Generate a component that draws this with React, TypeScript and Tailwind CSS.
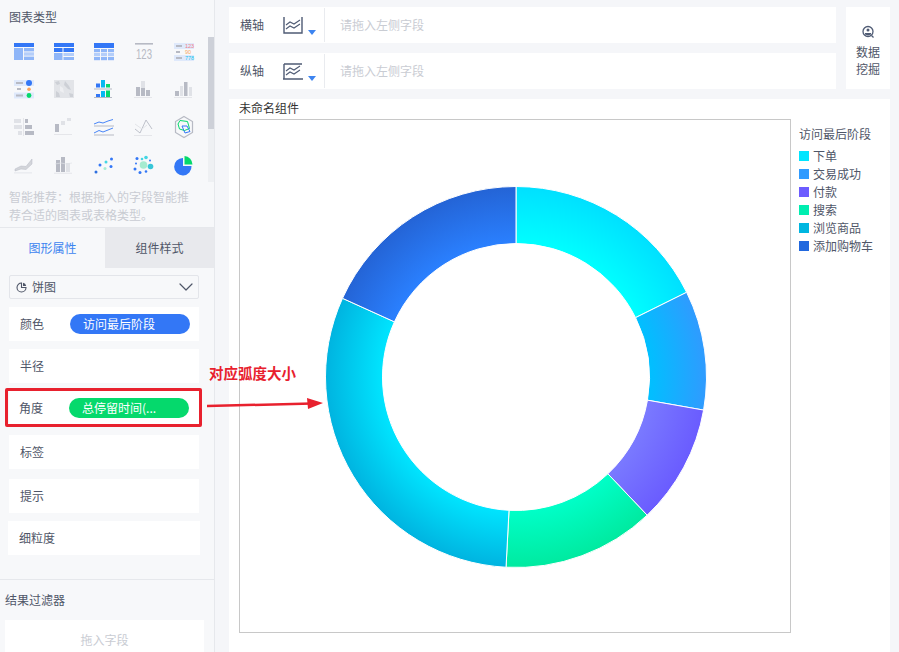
import { ChevronDown } from "lucide-react";

const FONT = { fontFamily: '"Noto Sans CJK SC", "Noto Sans", sans-serif' };

const BLUE = "#3377f6";
const SKY = "#8fb6f8";
const PALE = "#dfe9fb";
const GREY = "#b7bac4";
const LIGHT = "#e0e2e7";
const GREEN = "#05d96c";
const CYAN = "#06b8f2";

const LATIN = { fontFamily: '"Liberation Sans", sans-serif' };

const chartIcons = [
  // row 1
  <>
    <rect width="20" height="4" fill={BLUE} />
    <rect y="5" width="9" height="12" fill={SKY} />
    <rect x="10" y="5" width="10" height="3.4" fill={SKY} />
    <rect x="10" y="9.3" width="10" height="3.4" fill="#b4cefa" />
    <rect x="10" y="13.6" width="10" height="3.4" fill={SKY} />
  </>,
  <>
    <rect width="20" height="4" fill={BLUE} />
    <rect y="5" width="8.5" height="4" fill={BLUE} />
    <rect x="9.5" y="5" width="10.5" height="4" fill={BLUE} />
    <rect y="10" width="8.5" height="7" fill={SKY} />
    <rect x="9.5" y="10" width="10.5" height="3" fill="#b4cefa" />
    <rect x="9.5" y="14" width="10.5" height="3" fill={SKY} />
  </>,
  <>
    <rect width="20" height="5" fill={BLUE} />
    {[6, 10, 14].map((y) =>
      [0, 7, 14].map((x) => <rect key={`${x}-${y}`} x={x} y={y} width="6" height="3.2" fill={y === 10 ? "#b4cefa" : SKY} />)
    )}
  </>,
  <>
    <rect x="1" width="18" height="1.6" fill={GREY} />
    <text x="10" y="16" textAnchor="middle" fontSize="14" fill={GREY} style={LATIN} textLength="16" lengthAdjust="spacingAndGlyphs">123</text>
  </>,
  <>
    <rect width="20" height="6" fill={PALE} />
    <rect y="12" width="20" height="6" fill={PALE} />
    <rect x="2" y="2" width="6" height="2" fill={GREY} />
    <rect x="2" y="8" width="4" height="2" fill={GREY} />
    <rect x="2" y="14" width="6" height="2" fill={GREY} />
    <text x="11" y="5" fontSize="5.500" fill="#f0808a" style={LATIN}>123</text>
    <text x="11" y="11" fontSize="5.500" fill="#f8a860" style={LATIN}>90</text>
    <text x="11" y="17" fontSize="5.500" fill="#20c4ee" style={LATIN}>778</text>
  </>,
  // row 2
  <>
    <rect width="20" height="6" fill={PALE} />
    <rect y="12.500" width="20" height="6" fill={PALE} />
    <rect x="2" y="2" width="7" height="2" fill={GREY} />
    <rect x="3" y="8" width="4" height="2" fill={GREY} />
    <rect x="2" y="14.500" width="7" height="2" fill={GREY} />
    <circle cx="15" cy="3" r="3" fill={BLUE} />
    <circle cx="15" cy="9.200" r="1.800" fill="#fba35c" />
    <circle cx="15" cy="15.500" r="2.400" fill={GREEN} />
  </>,
  <>
    <rect width="20" height="18" fill="#e2e4e8" />
    <path d="M11 1l4 5 2 4-3-1-4-4zM2 11l3 2 1 4H2zM1 2l4-1 1 3-3 1zM15 13l4 1v3h-3z" fill="#cdd0d6" />
    <path d="M6 6l3 2 1 5-4-2z" fill="#eeeff2" />
  </>,
  <>
    <rect x="2" y="3.500" width="4" height="4" fill={BLUE} />
    <rect x="7" width="4" height="7.500" fill={CYAN} />
    <rect x="12" y="4" width="4" height="3.500" fill={GREEN} />
    <rect y="8.500" width="18" height="1" fill={GREY} />
    <rect x="2" y="14" width="4" height="3" fill={BLUE} />
    <rect x="7" y="11" width="4" height="6" fill={CYAN} />
    <rect x="12" y="10.500" width="4" height="6.500" fill={GREEN} />
    <rect y="17" width="18" height="1" fill={GREY} />
  </>,
  <>
    <rect x="7" y="1" width="4" height="15" fill={LIGHT} />
    <rect x="2" y="7" width="4" height="9" fill={GREY} />
    <rect x="7" y="8" width="4" height="8" fill={GREY} />
    <rect x="12" y="10" width="4" height="6" fill={GREY} />
    <rect y="17" width="18" height="0.800" fill={LIGHT} />
  </>,
  <>
    <rect x="1" y="11" width="4" height="5" fill={GREY} />
    <rect x="6" y="6" width="3" height="10" fill={LIGHT} />
    <rect x="10" y="2" width="3.500" height="14" fill={GREY} />
    <rect x="15" y="7" width="3" height="9" fill={LIGHT} />
    <rect y="17" width="18" height="0.800" fill={LIGHT} />
  </>,
  // row 3
  <>
    <rect x="0" y="1" width="7" height="4" fill={LIGHT} />
    <rect x="11" y="1" width="3" height="4" fill={GREY} />
    <rect y="7" width="8" height="4" fill={LIGHT} />
    <rect x="11" y="7" width="7" height="4" fill={GREY} />
    <rect x="4" y="13" width="4" height="4" fill={LIGHT} />
    <rect x="11" y="13" width="9" height="4" fill={GREY} />
    <rect x="9" width="0.800" height="18" fill={LIGHT} />
  </>,
  <>
    <rect x="1" y="6" width="4" height="8" fill={GREY} />
    <rect x="7" y="3" width="4" height="4" fill={LIGHT} />
    <rect x="13" y="0" width="4" height="3" fill={LIGHT} />
    <rect y="16" width="18" height="0.800" fill={LIGHT} />
  </>,
  <>
    <path d="M0 6l5-2 4 1 5-2 5-1.500" fill="none" stroke={BLUE} strokeWidth="0.900" />
    <rect y="7.500" width="20" height="1" fill={GREY} />
    <path d="M0 15l5-2.500 4 1.500 5-2 5-2" fill="none" stroke={BLUE} strokeWidth="0.900" />
    <rect y="16.500" width="20" height="1" fill={GREY} />
  </>,
  <>
    <path d="M1 11l5 4 6-13 6 9" fill="none" stroke={GREY} strokeWidth="0.900" />
    <path d="M1 6l7 5 5-4" fill="none" stroke={LIGHT} strokeWidth="0.900" />
    <rect y="17" width="18" height="0.800" fill={LIGHT} />
  </>,
  <>
    <path d="M10-1.500l8.500 5v11l-8.500 5-8.500-5v-11z" fill="none" stroke={GREY} strokeWidth="1.200" />
    <path d="M6 2.500l7.500 1 2 7-5 2-5-1.500-1.500-5z" fill="none" stroke={GREEN} strokeWidth="1" />
    <path d="M8 8h5l3 5.500-5 1.500z" fill="none" stroke={BLUE} strokeWidth="1" />
  </>,
  // row 4
  <>
    <path d="M1 13l6-3 5 .5 6-7.500v5l-6 5.500-5-.5-6 2z" fill="#d3d5da" stroke={GREY} strokeWidth="0.500" />
    <rect y="16.500" width="18" height="0.800" fill={LIGHT} />
  </>,
  <>
    <rect x="2" y="4" width="4" height="12" fill={GREY} />
    <rect x="7" y="1" width="4" height="15" fill={GREY} />
    <rect x="12" y="7" width="4" height="9" fill={LIGHT} />
    <path d="M1 8l6-1 5 1 6-1" fill="none" stroke={LIGHT} strokeWidth="0.700" />
    <rect y="16.800" width="18" height="0.800" fill={LIGHT} />
  </>,
  <>
    <circle cx="2" cy="16" r="1.500" fill="#2d6fe0" />
    <circle cx="6" cy="9" r="1.500" fill={BLUE} />
    <circle cx="11" cy="12.500" r="1.500" fill="#a5ecd5" />
    <circle cx="12" cy="6" r="1.500" fill="#44d6e4" />
    <circle cx="17.500" cy="3" r="1.500" fill={BLUE} />
    <circle cx="17" cy="10.500" r="1.500" fill={BLUE} />
  </>,
  <>
    <circle cx="9.500" cy="9" r="3.800" fill="#a6ebd0" />
    <circle cx="3" cy="2.500" r="1.500" fill={BLUE} />
    <circle cx="8" cy="3" r="1.300" fill="#44d6e4" />
    <circle cx="12" cy="1.500" r="1.800" fill="#44d6e4" />
    <circle cx="2" cy="7.500" r="1" fill={BLUE} />
    <circle cx="1" cy="13" r="1.500" fill={BLUE} />
    <circle cx="6" cy="16.500" r="1.500" fill={BLUE} />
    <circle cx="12" cy="15.500" r="1.300" fill={BLUE} />
    <circle cx="16.500" cy="10.500" r="2.800" fill="#38c6d8" />
    <circle cx="16" cy="4.500" r="1" fill={BLUE} />
  </>,
  <>
    <path d="M9 2v8h8.500A8.700 8.700 0 1 1 9 2z" fill={BLUE} />
    <path d="M10.500 0a8.500 8.500 0 0 1 8 8.500h-8z" fill={GREEN} />
  </>,
];

function AxisIcon({ flip }: { flip?: boolean }) {
  return (
    <svg width="20" height="19" viewBox="0 0 20 19" fill="none" stroke="#4f5b74" strokeWidth="1.400">
      {flip ? <path d="M1 2h18M1 2v15M0 17h20" /> : <path d="M1 1v16h18V1" />}
      <path d="M3 9l4-3 4 2 6-4" strokeWidth="1.100" />
      <path d="M3 13l4-3 4 2 6-4" strokeWidth="1.100" />
    </svg>
  );
}

function AxisRow({ label, flip }: { label: string; flip?: boolean }) {
  return (
    <div className="flex items-center h-[36px] bg-white">
      <span className="w-[54px] pl-[11px] text-[12px] text-[#4f5668]">{label}</span>
      <AxisIcon flip={flip} />
      <span className="ml-[5px] mt-[15px] w-0 h-0 border-x-[4px] border-t-[5px] border-x-transparent border-t-[#3d84f0]" />
      <div className="ml-[8px] h-[34px] w-px bg-[#e9ebef]" />
      <span className="ml-[15px] text-[12px] text-[#c9ccd3]">请拖入左侧字段</span>
    </div>
  );
}

const segments = [
  { from: 0, to: 63.6, inner: "#00ffff", outer: "#00e0ff" },
  { from: 63.6, to: 100, inner: "#00c0ff", outer: "#2f9bff" },
  { from: 100, to: 136.5, inner: "#7a7aff", outer: "#6a5cff" },
  { from: 136.5, to: 183, inner: "#00ffc8", outer: "#00eaa0" },
  { from: 183, to: 294.4, inner: "#00e5ff", outer: "#00b4e0" },
  { from: 294.4, to: 360, inner: "#2a80ff", outer: "#2464d6" },
];

const legend = [
  { name: "下单", color: "#00e5ff" },
  { name: "交易成功", color: "#2f9bff" },
  { name: "付款", color: "#6c5cff" },
  { name: "搜索", color: "#00eeb0" },
  { name: "浏览商品", color: "#00b6e0" },
  { name: "添加购物车", color: "#2168de" },
];

function arcPath(from: number, to: number) {
  const cx = 516;
  const cy = 377;
  const outer = 190.5;
  const inner = 133.5;
  const pt = (r: number, a: number) => {
    const t = (a * Math.PI) / 180;
    return `${cx + r * Math.sin(t)} ${cy - r * Math.cos(t)}`;
  };
  const large = to - from > 180 ? 1 : 0;
  return `M${pt(outer, from)} A${outer} ${outer} 0 ${large} 1 ${pt(outer, to)} L${pt(inner, to)} A${inner} ${inner} 0 ${large} 0 ${pt(inner, from)} Z`;
}

function Donut() {
  return (
    <svg className="block w-[550px] h-[512px]" viewBox="240 120 550 512">
      <defs>
        {segments.map((s, i) => (
          <radialGradient key={i} id={`seg${i}`} gradientUnits="userSpaceOnUse" cx="516" cy="377" r="190">
            <stop offset="0.7" stopColor={s.inner} />
            <stop offset="1" stopColor={s.outer} />
          </radialGradient>
        ))}
      </defs>
      {segments.map((s, i) => (
        <path key={i} d={arcPath(s.from, s.to)} fill={`url(#seg${i})`} stroke="#fff" strokeWidth="1" />
      ))}
    </svg>
  );
}

export default function App() {
  return (
    <div className="relative flex w-[899px] h-[652px] overflow-hidden bg-[#f5f6f9]" style={FONT}>
      {/* Left panel */}
      <aside className="w-[215px] h-full shrink-0 bg-[#f7f8fa] border-r border-[#e6e8ec]">
        <div className="h-[33px] pl-[9px] pt-[8px] text-[12px] leading-[18px] text-[#4f5668]">图表类型</div>
        <div className="flex h-[149px]">
          <div className="grid grid-cols-[repeat(5,40px)] auto-rows-[37.6px] pl-[4px] w-[208px]">
            {chartIcons.map((icon, i) => (
              <div key={i} className="flex items-center justify-center">
                <svg width="20" height="18" viewBox="0 0 20 18" className="overflow-visible">{icon}</svg>
              </div>
            ))}
          </div>
          <div className="mt-[4px] w-[6px] h-[145px] bg-[#eef0f3]">
            <div className="h-[92px] bg-[#cdd0d8]" />
          </div>
        </div>
        <p className="pl-[9px] pr-[20px] pt-[6px] h-[45px] text-[12px] leading-[18px] text-[#c9ccd3]">智能推荐：根据拖入的字段智能推荐合适的图表或表格类型。</p>
        <div className="flex h-[41px] border-t border-[#e6e8ec] text-[12px]">
          <div className="w-[105px] flex items-center justify-center text-[#3d84f0]">图形属性</div>
          <div className="flex-1 flex items-center justify-center bg-[#e8e9ed] text-[#4f5668]">组件样式</div>
        </div>
        <div className="ml-[9px] mt-[7px] w-[190px] h-[24px] flex items-center px-[6px] border border-[#e3e5ea] rounded-[2px] text-[12px] text-[#4f5668]">
          <svg width="11" height="11" viewBox="0 0 11 11" fill="none" stroke="#4f5668" strokeWidth="1.100">
            <path d="M5.500 1a4.500 4.500 0 1 0 4.500 4.500H5.500z" />
            <path d="M7 .8A4 4 0 0 1 10.200 4H7z" fill="#4f5668" stroke="none" />
          </svg>
          <span className="ml-[5px] flex-1">饼图</span>
          <ChevronDown size={24} strokeWidth={1.200} className="-mr-[6px] text-[#4f5668]" />
        </div>
        <div className="ml-[9px] mt-[8px] w-[190px] h-[34px] flex items-center pl-[11px] bg-white text-[12px] text-[#4f5668]">
          <span className="w-[50px]">颜色</span>
          <span className="w-[120px] h-[20px] pl-[13px] leading-[20px] rounded-full bg-[#3377f6] text-white">访问最后阶段</span>
        </div>
        <div className="ml-[9px] mt-[8px] w-[190px] h-[34px] flex items-center pl-[11px] bg-white text-[12px] text-[#4f5668]">半径</div>
        <div className="ml-[9px] mt-[8px] w-[190px] h-[34px] flex items-center pl-[10px] bg-white text-[12px] text-[#4f5668]">
          <span className="w-[50px]">角度</span>
          <span className="w-[120px] h-[20px] pl-[13px] leading-[20px] rounded-full bg-[#05d96c] text-white">总停留时间(...</span>
        </div>
        <div className="ml-[9px] mt-[10px] w-[190px] h-[34px] flex items-center pl-[11px] bg-white text-[12px] text-[#4f5668]">标签</div>
        <div className="ml-[9px] mt-[10px] w-[190px] h-[34px] flex items-center pl-[11px] bg-white text-[12px] text-[#4f5668]">提示</div>
        <div className="ml-[8px] mt-[8px] w-[192px] h-[34px] flex items-center pl-[11px] bg-white text-[12px] text-[#4f5668]">细粒度</div>
        <div className="mt-[24px] border-t border-[#e6e8ec] pl-[5px] pt-[11px] h-[41px] text-[12px] leading-[18px] text-[#4f5668]">结果过滤器</div>
        <div className="ml-[5px] w-[199px] h-[40px] flex items-center justify-center bg-white text-[12px] text-[#c9ccd3]">拖入字段</div>
      </aside>

      {/* Main area */}
      <main className="flex-1 pl-[14px] pt-[7px]">
        <div className="flex gap-[10px]">
          <div className="w-[607px] flex flex-col gap-[10px]">
            <AxisRow label="横轴" />
            <AxisRow label="纵轴" flip />
          </div>
          <div className="w-[44px] h-[82px] flex flex-col items-center bg-white pt-[18px] text-[12px] leading-[17px] text-[#4f5668]">
            <svg width="14" height="14" viewBox="0 0 14 14" fill="none" stroke="#4f5b74" strokeWidth="1.300">
              <circle cx="7" cy="6.500" r="5" />
              <path d="M4 8h6v1.500l-3 1-3-1z" fill="#4f5b74" stroke="none" />
              <circle cx="7" cy="5" r="1.500" fill="#4f5b74" stroke="none" />
              <path d="M10.500 10.500l2 2" />
            </svg>
            <span className="mt-[4px]">数据</span>
            <span>挖掘</span>
          </div>
        </div>
        <section className="mt-[10px] w-[661px] h-[553px] bg-white pl-[10px]">
          <div className="h-[20px] text-[12px] leading-[18px] text-[#333333]">未命名组件</div>
          <div className="flex">
            <div className="w-[552px] h-[514px] border border-[#c8c8c8]">
              <Donut />
            </div>
            <div className="ml-[8px] pt-[6px] text-[12px] text-[#4f5668]">
              <div className="h-[19px] leading-[18px]">访问最后阶段</div>
              <ul className="mt-[3px]">
                {legend.map((item) => (
                  <li key={item.name} className="flex items-center h-[18px]">
                    <span className="w-[10px] h-[10px] mr-[4px]" style={{ backgroundColor: item.color }} />
                    {item.name}
                  </li>
                ))}
              </ul>
            </div>
          </div>
        </section>
      </main>

      {/* Red annotation */}
      <div className="absolute left-[5px] top-[388px] w-[197px] h-[39px] border-[3px] border-[#e8212e] rounded-[2px]" />
      <span className="absolute left-[209px] top-[363px] text-[14.5px] leading-[20px] font-bold text-[#e8212e]">对应弧度大小</span>
      <svg className="absolute left-[205px] top-[396px]" width="120" height="16" viewBox="0 0 120 16">
        <path d="M2 10l105-2.500" stroke="#e8212e" strokeWidth="2.500" fill="none" />
        <path d="M118 7L102 2l1 11z" fill="#e8212e" />
      </svg>
    </div>
  );
}
